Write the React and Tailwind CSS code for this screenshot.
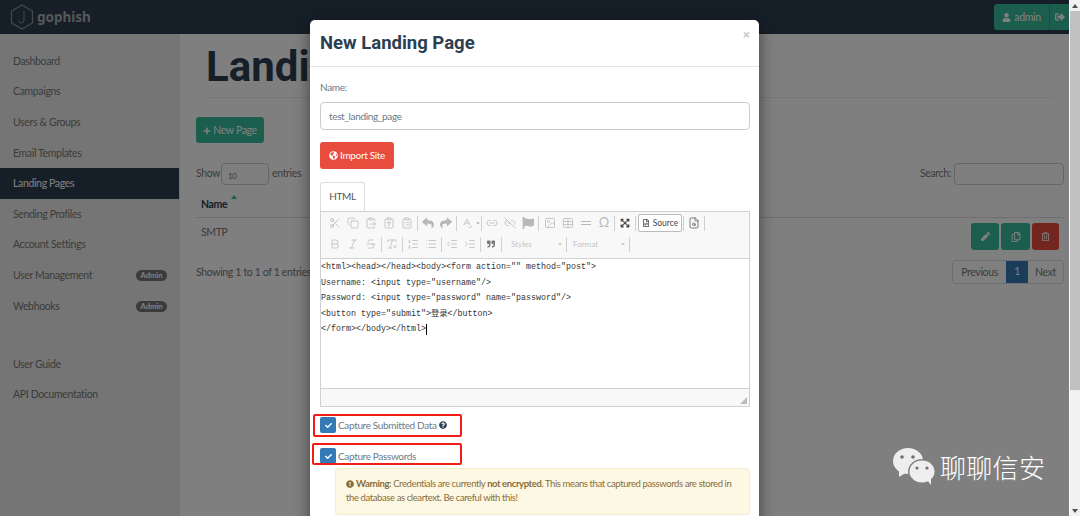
import { FaPlus, FaUser, FaSignOutAlt, FaPen, FaRegCopy, FaRegTrashAlt, FaCheck, FaGlobeAmericas, FaQuestionCircle, FaExclamationCircle, FaQuoteRight, FaReply, FaShare, FaFlag, FaExpandArrowsAlt, FaRegFileCode, FaCaretDown } from 'react-icons/fa';
import { Scissors, Copy, ClipboardList, ClipboardType, ClipboardPaste, SpellCheck, Link2, Link2Off, Image, Table, FileSearch, Bold, Italic, Strikethrough, RemoveFormatting, ListOrdered, List, IndentDecrease, IndentIncrease } from 'lucide-react';

const navTop = ['Dashboard', 'Campaigns', 'Users & Groups', 'Email Templates', 'Landing Pages', 'Sending Profiles', 'Account Settings', 'User Management', 'Webhooks'];

function Sep({ className = '' }) {
  return <span className={`mx-[1px] h-[15px] w-px bg-[#d0d0d0] ${className}`} />;
}

function Tool({ icon: Icon }) {
  return (
    <span className="flex h-[18px] w-[18px] items-center justify-center text-[#b8b8b8]">
      <Icon size={12} strokeWidth={1.5} />
    </span>
  );
}

function Logo() {
  return (
    <svg width="24" height="26" viewBox="0 0 24 26" fill="none" className="text-[#8c9296]">
      <path d="M12 1 L22.5 7 V19 L12 25 L1.5 19 V7 Z" stroke="currentColor" strokeWidth="1.2" />
      <path d="M14 7 V16 Q14 19 11.5 19 Q9 19 9 16.5" stroke="currentColor" strokeWidth="1" />
    </svg>
  );
}

function WeChat() {
  return (
    <svg width="42" height="38" viewBox="0 0 42 38">
      <ellipse cx="15" cy="13" rx="15" ry="13" fill="#eeeeee" />
      <path d="M6 22 L6 29 L14 24 Z" fill="#eeeeee" />
      <ellipse cx="29" cy="23.5" rx="14" ry="12.5" fill="#808080" />
      <ellipse cx="29" cy="23.5" rx="12.5" ry="11" fill="#eeeeee" />
      <path d="M34 32 L38 37 L38 29 Z" fill="#eeeeee" />
      <circle cx="9" cy="9" r="1.8" fill="#707070" />
      <circle cx="20" cy="9" r="1.8" fill="#707070" />
      <circle cx="24" cy="20" r="1.6" fill="#707070" />
      <circle cx="34" cy="20" r="1.6" fill="#707070" />
    </svg>
  );
}

export default function App() {
  return (
    <div className="flex h-[516px] w-[1080px] overflow-hidden bg-white font-['Lato',sans-serif] text-[10.5px] tracking-[-0.35px] text-[#777]">
      <div className="relative w-[1069px] overflow-hidden bg-white">
        {/* Navbar */}
        <div className="flex h-[34px] items-center justify-between bg-[#2c3e50] pl-[10px]">
          <div className="flex items-center gap-[3px]">
            <Logo />
            <span className="font-['Noto_Sans',sans-serif] text-[13.5px] font-bold tracking-normal text-[#aab0b4]">gophish</span>
          </div>
          <div className="flex h-[26px] w-[75px] self-center rounded-l-[3px] bg-[#37bc9b]">
            <span className="flex w-[56px] items-center justify-center gap-[3px] border-r border-[#2aa285] pt-[1px] text-white">
              <FaUser className="h-[9px] w-[9px]" />
              admin
            </span>
            <span className="flex flex-1 items-center justify-center text-white">
              <FaSignOutAlt className="h-[10px] w-[10px]" />
            </span>
          </div>
        </div>

        <div className="flex h-[482px]">
          {/* Sidebar */}
          <div className="w-[180px] border-r border-[#e6e6e6] bg-[#ebebeb] pt-[11.7px]">
            {navTop.map((item) => (
              <div
                key={item}
                className={`flex h-[30.6px] items-center justify-between pl-[13px] pr-[12px] pt-[1.5px] ${item === 'Landing Pages' ? 'bg-[#2c3e50] text-white' : ''}`}
              >
                {item}
                {(item === 'User Management' || item === 'Webhooks') && (
                  <span className="flex h-[11px] w-[31px] items-center justify-center rounded-full bg-[#777] text-[7.5px] font-bold tracking-normal text-white">Admin</span>
                )}
              </div>
            ))}
            <div className="mb-[12.7px] mt-[14px] h-px bg-[#e6e6e6]" />
            <div className="flex h-[30.6px] items-center pl-[13px] pt-[1px]">User Guide</div>
            <div className="flex h-[30.6px] items-center pl-[13px] pt-[1px]">API Documentation</div>
          </div>

          {/* Main */}
          <div className="flex-1 pl-[16px] pr-[5px]">
            <div className="ml-[10px] mr-[10px] mt-[8px] h-[56px] border-b border-[#eee] font-['Roboto',sans-serif] text-[42px] leading-[50px] font-bold tracking-normal text-[#2c3e50]">
              Landing Pages
            </div>
            <div className="mt-[19px] flex h-[26px] w-[68px] items-center justify-center gap-[2px] rounded-[3px] bg-[#37bc9b] pt-[1px] text-white">
              <FaPlus className="h-[8px] w-[8px]" />
              New Page
            </div>
            <div className="mt-[20px] flex h-[22px] items-center justify-between">
              <div className="flex items-center">
                <span className="w-[25px]">Show</span>
                <span className="mr-[3px] flex h-[22px] w-[48px] items-end rounded-[4px] border border-[#ccc] bg-white pb-[2px] pl-[6px] text-[8px]">10</span>
                entries
              </div>
              <div className="flex items-center gap-[3px]">
                Search:
                <span className="h-[22px] w-[110px] rounded-[4px] border border-[#ccc] bg-white" />
              </div>
            </div>
            <div className="relative flex h-[33px] items-end border-b border-[#ddd] pb-[4px] pl-[5px] font-bold text-[#2c3e50]">
              Name
              <span className="absolute left-[35px] top-[10px] h-0 w-0 border-x-[3.5px] border-b-[4px] border-x-transparent border-b-[#37bc9b]" />
            </div>
            <div className="flex h-[38px] items-start justify-between pl-[5px] pr-[5px] pt-[5px]">
              <span className="mt-[2px]">SMTP</span>
              <div className="flex gap-[2px] text-white">
                <span className="flex h-[27px] w-[28px] items-center justify-center rounded-[3px] bg-[#37bc9b]"><FaPen className="h-[9px] w-[9px]" /></span>
                <span className="flex h-[27px] w-[29px] items-center justify-center rounded-[3px] bg-[#37bc9b]"><FaRegCopy className="h-[10px] w-[10px]" /></span>
                <span className="flex h-[27px] w-[27px] items-center justify-center rounded-[3px] bg-[#e74c3c]"><FaRegTrashAlt className="h-[9px] w-[9px]" /></span>
              </div>
            </div>
            <div className="flex items-start justify-between">
              <span className="mt-[9px]">Showing 1 to 1 of 1 entries</span>
              <div className="mt-[4px] flex h-[24px] rounded-[3px] border border-[#ddd] bg-white pt-[1px]">
                <span className="flex w-[53px] items-center justify-center">Previous</span>
                <span className="-mt-[1px] flex w-[22px] items-center justify-center bg-[#337ab7] text-white">1</span>
                <span className="flex w-[35px] items-center justify-center">Next</span>
              </div>
            </div>
          </div>
        </div>

        {/* Backdrop */}
        <div className="absolute inset-0 bg-black/50" />

        {/* Modal */}
        <div className="absolute left-[310px] top-[20px] h-[520px] w-[449px] rounded-[5px] bg-white text-[10px] text-[#6b7a88] shadow-[0_5px_15px_rgba(0,0,0,0.5)]">
          <div className="relative flex h-[47px] items-center border-b border-[#e5e5e5] pl-[10px] pt-[2px] font-['Roboto',sans-serif] text-[18.5px] font-bold tracking-normal text-[#2c3e50]">
            New Landing Page
            <span className="absolute right-[9px] top-[7px] text-[13px] leading-[16px] font-bold text-[#c8c8c8]">×</span>
          </div>
          <div className="pl-[10px] pr-[9px]">
            <div className="mt-[13px] leading-[14px]">Name:</div>
            <div className="mt-[8px] flex h-[28px] items-center rounded-[4px] border border-[#ccc] pl-[8px] text-[#6b7a88]">test_landing_page</div>
            <div className="mt-[12px] flex h-[27px] w-[74px] items-center justify-center gap-[2px] rounded-[3px] bg-[#e74c3c] text-white">
              <FaGlobeAmericas className="h-[9px] w-[9px]" />
              Import Site
            </div>
            <div className="mt-[13px] flex h-[29px] w-[45px] items-center justify-center rounded-t-[3px] border border-b-0 border-[#ddd] pb-[1px] text-[#555]">HTML</div>

            {/* Editor */}
            <div className="border border-[#d1d1d1] bg-[#f8f8f8] tracking-normal">
              <div className="h-[47px] border-b border-[#d1d1d1] pl-[5px] pt-[1px]">
                <div className="flex h-[20px] items-center">
                  <Tool icon={Scissors} />
                  <Tool icon={Copy} />
                  <Tool icon={ClipboardPaste} />
                  <Tool icon={ClipboardType} />
                  <Tool icon={ClipboardList} />
                  <Sep />
                  <Tool icon={FaReply} />
                  <Tool icon={FaShare} />
                  <Sep />
                  <Tool icon={SpellCheck} />
                  <FaCaretDown className="h-[6px] w-[4px] text-[#b8b8b8]" />
                  <Sep />
                  <Tool icon={Link2} />
                  <Tool icon={Link2Off} />
                  <Tool icon={FaFlag} />
                  <Sep />
                  <span className="w-[1px]" />
                  <Tool icon={Image} />
                  <Tool icon={Table} />
                  <span className="flex h-[18px] w-[18px] flex-col items-center justify-center gap-[2px]">
                    <span className="h-[4px] w-[10px] border-b border-[#b8b8b8]" />
                    <span className="h-[4px] w-[10px] border-t border-[#b8b8b8]" />
                  </span>
                  <span className="flex h-[18px] w-[18px] items-center justify-center text-[13px] text-[#b8b8b8]">Ω</span>
                  <Sep />
                  <span className="flex h-[18px] w-[18px] items-center justify-center text-[#444]"><FaExpandArrowsAlt className="h-[10px] w-[10px]" /></span>
                  <Sep />
                  <span className="ml-[1px] flex h-[18px] w-[44px] items-center justify-center gap-[3px] rounded-[2px] border border-[#bbb] bg-white text-[8.5px] text-[#474747]">
                    <FaRegFileCode className="h-[8px] w-[8px]" />
                    Source
                  </span>
                  <Sep />
                  <span className="flex h-[18px] w-[18px] items-center justify-center text-[#555]"><FileSearch size={12} strokeWidth={1.5} /></span>
                  <Sep />
                </div>
                <div className="mt-[1px] flex h-[20px] items-center">
                  <Tool icon={Bold} />
                  <Tool icon={Italic} />
                  <Tool icon={Strikethrough} />
                  <Sep />
                  <Tool icon={RemoveFormatting} />
                  <Sep />
                  <Tool icon={ListOrdered} />
                  <Tool icon={List} />
                  <Sep />
                  <Tool icon={IndentDecrease} />
                  <Tool icon={IndentIncrease} />
                  <Sep />
                  <span className="flex h-[18px] w-[18px] items-center justify-center text-[#777]"><FaQuoteRight className="h-[8px] w-[8px]" /></span>
                  <Sep />
                  <span className="flex w-[62px] items-center justify-between pl-[8px] pr-[2px] text-[8px] text-[#c4c4c4]">Styles<FaCaretDown className="h-[6px] w-[6px]" /></span>
                  <Sep />
                  <span className="flex w-[60px] items-center justify-between pl-[5px] pr-[2px] text-[8px] text-[#c4c4c4]">Format<FaCaretDown className="h-[6px] w-[6px]" /></span>
                  <Sep />
                </div>
              </div>
              <div className="h-[129px] bg-white pt-[1px] font-['Liberation_Mono','Noto_Sans_CJK_SC',monospace] text-[8.33px] leading-[15.5px] text-[#333]">
                <div>{'<html><head></head><body><form action="" method="post">'}</div>
                <div>{'Username: <input type="username"/>'}</div>
                <div>{'Password: <input type="password" name="password"/>'}</div>
                <div>{'<button type="submit">登录</button>'}</div>
                <div className="flex items-center">{'</form></body></html>'}<span className="h-[11px] w-px bg-black" /></div>
              </div>
              <div className="relative h-[18px] border-t border-[#d1d1d1]">
                <span className="absolute bottom-[2px] right-[2px] h-0 w-0 border-b-[7px] border-l-[7px] border-b-[#bbb] border-l-transparent" />
              </div>
            </div>

            <div className="relative mt-[10px] flex h-[16px] items-center gap-[2px]">
              <span className="flex h-[16px] w-[16px] items-center justify-center rounded-[2px] bg-[#337ab7] text-white"><FaCheck className="h-[7px] w-[7px]" /></span>
              Capture Submitted Data
              <FaQuestionCircle className="h-[8px] w-[8px] text-[#2c3e50]" />
              <span className="absolute -left-[7px] -top-[3px] h-[23px] w-[149px] rounded-[2px] border-[2px] border-[#f21c17]" />
            </div>
            <div className="relative mt-[15px] flex h-[16px] items-center gap-[2px]">
              <span className="flex h-[16px] w-[16px] items-center justify-center rounded-[2px] bg-[#337ab7] text-white"><FaCheck className="h-[7px] w-[7px]" /></span>
              Capture Passwords
              <span className="absolute -left-[8px] -top-[5px] h-[22px] w-[150px] rounded-[2px] border-[2px] border-[#f21c17]" />
            </div>
            <div className="ml-[15px] mt-[4px] h-[47px] rounded-[3px] border border-[#faebcc] bg-[#fcf8e3] px-[10px] pt-[8px] text-[9.5px] leading-[14px] tracking-[-0.4px] text-[#8a6d3b]">
              <FaExclamationCircle className="mr-[2px] inline h-[8px] w-[8px] align-[-1px]" />
              <b>Warning:</b> Credentials are currently <b>not encrypted</b>. This means that captured passwords are stored in the database as cleartext. Be careful with this!
            </div>
          </div>
        </div>

        {/* Watermark */}
        <div className="absolute left-[893px] top-[448px] flex items-center gap-[5px] font-['Noto_Sans_CJK_SC',sans-serif] text-[26px] font-light leading-[38px] tracking-[0.3px] text-white">
          <WeChat />
          聊聊信安
        </div>
      </div>

      {/* Scrollbar */}
      <div className="flex w-[11px] flex-col border-l border-white bg-[#f1f1f1]">
        <div className="flex h-[11px] items-center justify-center"><span className="h-0 w-0 border-x-[3px] border-b-[4px] border-x-transparent border-b-[#505050]" /></div>
        <div className="h-[379px] bg-[#c1c1c1]" />
        <div className="flex-1" />
        <div className="flex h-[11px] items-center justify-center"><span className="h-0 w-0 border-x-[3px] border-t-[4px] border-x-transparent border-t-[#505050]" /></div>
      </div>
    </div>
  );
}
